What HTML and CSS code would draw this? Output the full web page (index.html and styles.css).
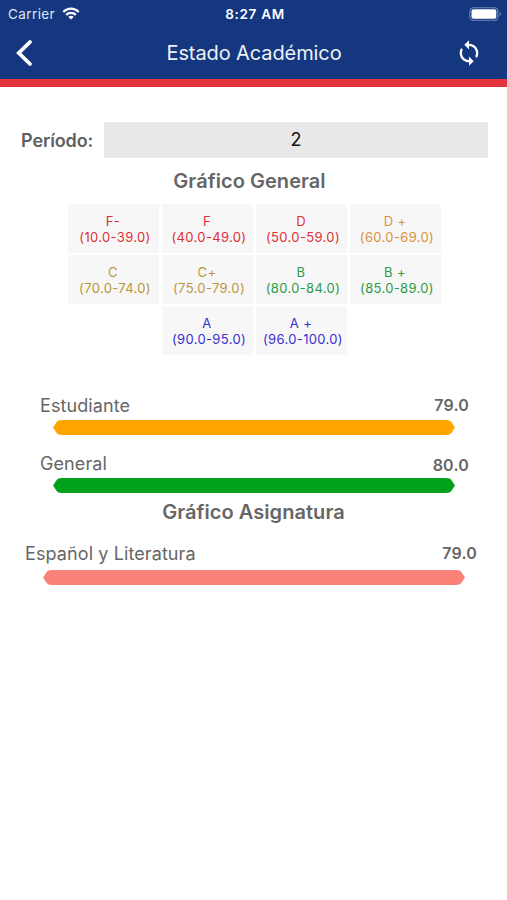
FILE: index.html
```html
<!DOCTYPE html>
<html lang="es">

<head>
  <meta charset="UTF-8">
  <meta name="viewport" content="width=device-width, initial-scale=1.0">
  <title>Estado Académico</title>
  <link rel="stylesheet" href="styles.css">
</head>

<body>
  <header class="header">
    <div class="status">
      <div class="carrier">
        <span>Carrier</span>
        <svg class="wifi" width="18" height="13" viewBox="0 0 18 13" fill="none" stroke="#fff" stroke-width="2.2">
          <path d="M1.3 4.9C5.6.5 12.4.5 16.7 4.9" />
          <path d="M4.2 7.9c2.7-2.6 6.9-2.6 9.6 0" />
          <path d="M9 12.6L6.3 9.9c1.5-1.4 3.9-1.4 5.4 0z" fill="#fff" stroke="none" />
        </svg>
      </div>
      <span class="time">8:27 AM</span>
      <svg class="battery" width="33" height="14" viewBox="0 0 33 14">
        <rect x=".9" y=".7" width="28" height="12.6" rx="3.6" fill="none" stroke="#7389b6" stroke-width="1.1" />
        <rect x="2.5" y="2.3" width="24.8" height="9.4" rx="2" fill="#fff" />
        <path d="M30.6 4.8c1.7.6 1.7 3.8 0 4.4z" fill="#7389b6" />
      </svg>
    </div>
    <nav class="navbar">
      <svg class="back" width="18" height="28" viewBox="0 0 18 28" fill="none" stroke="#fff" stroke-width="3.8" stroke-linecap="round">
        <path d="M15 3L3.8 14 15 25" />
      </svg>
      <h1>Estado Académico</h1>
      <svg class="sync" width="28" height="28" viewBox="0 0 24 24" fill="#fff">
        <path d="M12 4V1L8 5l4 4V6c3.31 0 6 2.69 6 6 0 1.01-.25 1.97-.7 2.8l1.46 1.46C19.54 15.03 20 13.57 20 12c0-4.42-3.58-8-8-8zm0 14c-3.31 0-6-2.69-6-6 0-1.01.25-1.97.7-2.8L5.24 7.74C4.46 8.97 4 10.43 4 12c0 4.42 3.58 8 8 8v3l4-4-4-4v3z" />
      </svg>
    </nav>
  </header>

  <main>
    <div class="period">
      <label>Período:</label>
      <div class="period-value">2</div>
    </div>

    <h2>Gráfico General</h2>

    <div class="grades">
      <div class="grade red">F-<br>&nbsp;(10.0-39.0)</div>
      <div class="grade red">F<br>&nbsp;(40.0-49.0)</div>
      <div class="grade red">D<br>&nbsp;(50.0-59.0)</div>
      <div class="grade orange">D +<br>&nbsp;(60.0-69.0)</div>
      <div class="grade gold">C<br>&nbsp;(70.0-74.0)</div>
      <div class="grade gold">C+<br>&nbsp;(75.0-79.0)</div>
      <div class="grade green">B<br>&nbsp;(80.0-84.0)</div>
      <div class="grade green">B +<br>&nbsp;(85.0-89.0)</div>
      <div class="grade blue">A<br>&nbsp;(90.0-95.0)</div>
      <div class="grade blue">A +<br>&nbsp;(96.0-100.0)</div>
    </div>

    <section class="general">
      <div class="item">
        <div class="row"><span class="name">Estudiante</span><span class="score">79.0</span></div>
        <div class="bar bar-orange"></div>
      </div>
      <div class="item">
        <div class="row"><span class="name">General</span><span class="score low">80.0</span></div>
        <div class="bar bar-green"></div>
      </div>
    </section>

    <h2 class="subject-title">Gráfico Asignatura</h2>

    <section class="subjects">
      <div class="row"><span class="name">Español y Literatura</span><span class="score">79.0</span></div>
      <div class="bar bar-pink"></div>
    </section>
  </main>
</body>

</html>
```

FILE: styles.css
```css
* {
  box-sizing: border-box;
}

body {
  margin: 0;
  background-color: #fff;
  color: #666;
  font-family: Inter, "Liberation Sans", sans-serif;
}

.header {
  height: 87px;
  background-color: #14377f;
  border-bottom: 8px solid #e4353c;
  color: #fff;
}

.status {
  display: grid;
  grid-template-columns: 1fr auto 1fr;
  align-items: center;
  height: 27px;
  padding: 0 5px 0 8px;
}

.carrier {
  display: flex;
  align-items: center;
  gap: 7px;
  font-size: 13.5px;
  letter-spacing: 0.4px;
  color: #dfe6f3;
}

.time {
  font-size: 13.5px;
  font-weight: 600;
  letter-spacing: 0.7px;
}

.battery {
  justify-self: end;
}

.navbar {
  display: flex;
  align-items: center;
  justify-content: space-between;
  height: 52px;
  padding: 0 24px 0 15px;
}

h1 {
  margin: 0;
  padding-left: 20px;
  font-size: 20px;
  font-weight: 400;
  letter-spacing: -0.1px;
  color: #edf1f8;
}

.period {
  display: flex;
  align-items: center;
  height: 36px;
  margin: 35px 19px 0 21px;
}

.period label {
  width: 83px;
  font-size: 18px;
  font-weight: 600;
  letter-spacing: -0.1px;
  color: #606060;
}

.period-value {
  flex: 1;
  line-height: 36px;
  background-color: #e8e8e8;
  color: #111;
  font-size: 18px;
  text-align: center;
}

h2 {
  margin: 9px 0 0;
  padding-right: 8px;
  font-size: 20px;
  font-weight: 600;
  line-height: 28px;
  letter-spacing: 0.05px;
  text-align: center;
}

.grades {
  display: flex;
  flex-wrap: wrap;
  justify-content: center;
  gap: 2px 3px;
  width: 374px;
  margin: 9px 0 0 67px;
}

.grade {
  width: 91px;
  height: 49px;
  padding-top: 9px;
  background-color: #f7f7f7;
  font-size: 13px;
  line-height: 16px;
  letter-spacing: 0.35px;
  text-align: center;
}

.red {
  color: #de3035;
}

.orange {
  color: #de8f3c;
}

.gold {
  color: #ba9638;
}

.green {
  color: #2c9a49;
}

.blue {
  color: #3630d0;
}

.general {
  margin: 39px 38px 0 40px;
}

.item {
  height: 58px;
}

.row {
  display: flex;
  align-items: center;
  justify-content: space-between;
  height: 23px;
  line-height: 23px;
}

.name {
  font-size: 18px;
  letter-spacing: 0.1px;
}

.score {
  font-size: 16px;
  font-weight: 600;
  letter-spacing: 0.2px;
}

.score.low {
  padding-top: 3px;
}

/* slightly pointed ends */
.bar {
  height: 15px;
  margin: 3px 14px 0 13px;
  border-radius: 9px / 7.5px;
  clip-path: polygon(0 50%, 5px 0, calc(100% - 5px) 0, 100% 50%, calc(100% - 5px) 100%, 5px 100%);
}

.bar-orange {
  background-color: #ffa500;
}

.bar-green {
  background-color: #02a11b;
}

.bar-pink {
  background-color: #fa8278;
}

.subject-title {
  margin-top: -12px;
  padding: 0;
}

.subjects {
  margin: 16px 30px 0 25px;
}

.subjects .bar {
  margin: 5px 12px 0 18px;
}
```
